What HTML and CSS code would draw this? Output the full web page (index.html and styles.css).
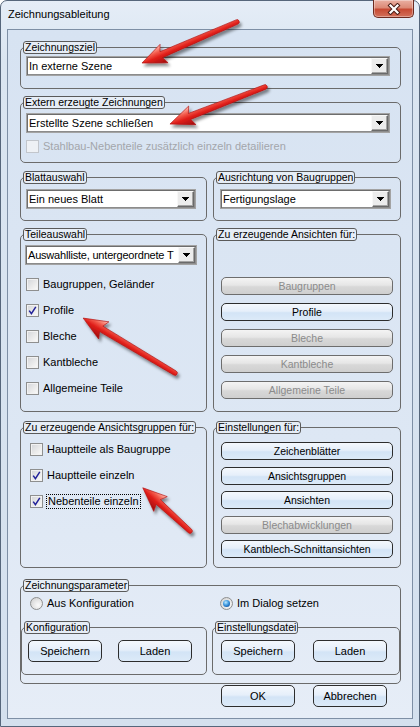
FILE: index.html
```html
<!DOCTYPE html>
<html lang="de">
<head>
<meta charset="utf-8">
<title>Zeichnungsableitung</title>
<link rel="stylesheet" href="styles.css">
</head>
<body>
<div class="window">
  <div class="titlebar">
    <span class="title">Zeichnungsableitung</span>
    <div class="close-btn">
      <svg width="14" height="12" viewBox="0 0 14 12">
        <path d="M3.5 2.5 L10.5 9.5 M10.5 2.5 L3.5 9.5" stroke="#4a1d16" stroke-width="4.2" stroke-linecap="square" fill="none"/>
        <path d="M3.5 2.5 L10.5 9.5 M10.5 2.5 L3.5 9.5" stroke="#ffffff" stroke-width="2.2" stroke-linecap="square" fill="none"/>
      </svg>
    </div>
  </div>
  <div class="client">
    <fieldset class="grp g-ziel">
      <legend>Zeichnungsziel</legend>
      <div class="gbody">
        <div class="combo"><span class="combo-text">In externe Szene</span><span class="combo-btn"><svg width="7" height="4" viewBox="0 0 7 4"><path d="M0 0h7v1h-1v1h-1v1h-1v1h-1v-1h-1v-1h-1v-1h-1z"/></svg></span></div>
      </div>
    </fieldset>

    <fieldset class="grp g-extern">
      <legend>Extern erzeugte Zeichnungen</legend>
      <div class="gbody">
        <div class="combo"><span class="combo-text">Erstellte Szene schließen</span><span class="combo-btn"><svg width="7" height="4" viewBox="0 0 7 4"><path d="M0 0h7v1h-1v1h-1v1h-1v1h-1v-1h-1v-1h-1v-1h-1z"/></svg></span></div>
        <div class="chk disabled"><span class="box"></span><span class="lbl">Stahlbau-Nebenteile zusätzlich einzeln detailieren</span></div>
      </div>
    </fieldset>

    <div class="row row-blatt">
      <fieldset class="grp">
        <legend>Blattauswahl</legend>
        <div class="gbody b-left">
          <div class="combo"><span class="combo-text">Ein neues Blatt</span><span class="combo-btn"><svg width="7" height="4" viewBox="0 0 7 4"><path d="M0 0h7v1h-1v1h-1v1h-1v1h-1v-1h-1v-1h-1v-1h-1z"/></svg></span></div>
        </div>
      </fieldset>
      <fieldset class="grp">
        <legend>Ausrichtung von Baugruppen</legend>
        <div class="gbody b-right">
          <div class="combo"><span class="combo-text">Fertigungslage</span><span class="combo-btn"><svg width="7" height="4" viewBox="0 0 7 4"><path d="M0 0h7v1h-1v1h-1v1h-1v1h-1v-1h-1v-1h-1v-1h-1z"/></svg></span></div>
        </div>
      </fieldset>
    </div>

    <div class="row row-teile">
      <fieldset class="grp">
        <legend>Teileauswahl</legend>
        <div class="gbody t-left">
          <div class="combo"><span class="combo-text tight">Auswahlliste, untergeordnete T</span><span class="combo-btn"><svg width="7" height="4" viewBox="0 0 7 4"><path d="M0 0h7v1h-1v1h-1v1h-1v1h-1v-1h-1v-1h-1v-1h-1z"/></svg></span></div>
          <div class="checks">
            <div class="chk"><span class="box"></span><span class="lbl">Baugruppen, Geländer</span></div>
            <div class="chk"><span class="box on"><svg width="9" height="9" viewBox="0 0 9 9"><path d="M1.2 4.6 L3.4 7.6 L7.8 0.8" stroke="#22229a" stroke-width="1.5" fill="none"/></svg></span><span class="lbl">Profile</span></div>
            <div class="chk"><span class="box"></span><span class="lbl">Bleche</span></div>
            <div class="chk"><span class="box"></span><span class="lbl">Kantbleche</span></div>
            <div class="chk"><span class="box"></span><span class="lbl">Allgemeine Teile</span></div>
          </div>
        </div>
      </fieldset>
      <fieldset class="grp">
        <legend>Zu erzeugende Ansichten für:</legend>
        <div class="gbody t-right">
          <div class="btn dis">Baugruppen</div>
          <div class="btn">Profile</div>
          <div class="btn dis">Bleche</div>
          <div class="btn dis">Kantbleche</div>
          <div class="btn dis">Allgemeine Teile</div>
        </div>
      </fieldset>
    </div>

    <div class="row row-gruppen">
      <fieldset class="grp">
        <legend>Zu erzeugende Ansichtsgruppen für:</legend>
        <div class="gbody r-left">
          <div class="chk"><span class="box"></span><span class="lbl">Hauptteile als Baugruppe</span></div>
          <div class="chk"><span class="box on"><svg width="9" height="9" viewBox="0 0 9 9"><path d="M1.2 4.6 L3.4 7.6 L7.8 0.8" stroke="#22229a" stroke-width="1.5" fill="none"/></svg></span><span class="lbl">Hauptteile einzeln</span></div>
          <div class="chk"><span class="box on"><svg width="9" height="9" viewBox="0 0 9 9"><path d="M1.2 4.6 L3.4 7.6 L7.8 0.8" stroke="#22229a" stroke-width="1.5" fill="none"/></svg></span><span class="lbl focus">Nebenteile einzeln</span></div>
        </div>
      </fieldset>
      <fieldset class="grp">
        <legend>Einstellungen für:</legend>
        <div class="gbody r-right">
          <div class="btn">Zeichenblätter</div>
          <div class="btn">Ansichtsgruppen</div>
          <div class="btn">Ansichten</div>
          <div class="btn dis">Blechabwicklungen</div>
          <div class="btn">Kantblech-Schnittansichten</div>
        </div>
      </fieldset>
    </div>

    <fieldset class="grp g-param">
      <legend>Zeichnungsparameter</legend>
      <div class="gbody p-body">
        <div class="radios">
          <div class="radio"><span class="rb"></span><span class="lbl">Aus Konfiguration</span></div>
          <div class="radio"><span class="rb on"></span><span class="lbl">Im Dialog setzen</span></div>
        </div>
        <div class="subrow">
          <fieldset class="grp sub">
            <legend>Konfiguration</legend>
            <div class="gbody s-left">
              <div class="btn big">Speichern</div>
              <div class="btn big">Laden</div>
            </div>
          </fieldset>
          <fieldset class="grp sub">
            <legend>Einstellungsdatei</legend>
            <div class="gbody s-right">
              <div class="btn big">Speichern</div>
              <div class="btn big">Laden</div>
            </div>
          </fieldset>
        </div>
      </div>
    </fieldset>

    <div class="footer">
      <div class="btn big">OK</div>
      <div class="btn big">Abbrechen</div>
    </div>
  </div>
</div>

<svg class="annotations" width="420" height="727" viewBox="0 0 420 727">
  <defs>
    <linearGradient id="redg" gradientUnits="userSpaceOnUse" x1="0" y1="9" x2="0" y2="-9">
      <stop offset="0" stop-color="#ffb3a6"/>
      <stop offset="0.3" stop-color="#f2584a"/>
      <stop offset="0.55" stop-color="#e01f1a"/>
      <stop offset="1" stop-color="#a30d0d"/>
    </linearGradient>
    <filter id="shadow" x="-20%" y="-20%" width="140%" height="140%">
      <feDropShadow dx="2" dy="3" stdDeviation="1.6" flood-color="#000" flood-opacity="0.45"/>
    </filter>
  </defs>
  <g filter="url(#shadow)">
    <g transform="translate(237 22) rotate(156.65)">
      <path d="M0 -2.3 L82.5 -3.2 L79.5 -10 L103.5 0 L79.5 10 L82.5 3.2 L0 2.3 A2.3 2.3 0 0 1 0 -2.3 Z" fill="url(#redg)" stroke="#b01010" stroke-width="0.6"/>
    </g>
  </g>
  <g filter="url(#shadow)">
    <g transform="translate(265 87) rotate(158.7)">
      <path d="M0 -2.3 L81 -3.2 L78 -10 L102 0 L78 10 L81 3.2 L0 2.3 A2.3 2.3 0 0 1 0 -2.3 Z" fill="url(#redg)" stroke="#b01010" stroke-width="0.6"/>
    </g>
  </g>
  <g filter="url(#shadow)">
    <g transform="translate(175 373) rotate(210.87)">
      <path d="M0 -2.3 L86 -3.2 L83 -10 L107 0 L83 10 L86 3.2 L0 2.3 A2.3 2.3 0 0 1 0 -2.3 Z" fill="url(#redg)" stroke="#b01010" stroke-width="0.6"/>
    </g>
  </g>
  <g filter="url(#shadow)">
    <g transform="translate(190 531) rotate(222.46)">
      <path d="M0 -2.3 L43 -3.2 L40 -10 L64 0 L40 10 L43 3.2 L0 2.3 A2.3 2.3 0 0 1 0 -2.3 Z" fill="url(#redg)" stroke="#b01010" stroke-width="0.6"/>
    </g>
  </g>
</svg>
</body>
</html>
```

FILE: styles.css
```css
* { box-sizing: border-box; }
html, body { margin: 0; padding: 0; }
body {
  width: 420px;
  height: 727px;
  overflow: hidden;
  position: relative;
  font-family: "Liberation Sans", Arial, sans-serif;
  font-size: 11px;
  color: #000;
  background: #ffffff;
}

.window {
  width: 420px;
  height: 727px;
  border: 1px solid #56667b;
  border-radius: 7px 7px 0 0;
  background: linear-gradient(180deg, #e5edf7 0, #dae5f1 60px, #d4e0ee 100%);
  padding: 0 6px 7px 6px;
  display: flex;
  flex-direction: column;
}

.titlebar {
  height: 28px;
  flex: none;
  display: flex;
  justify-content: space-between;
  align-items: flex-start;
}
.title {
  margin: 7px 0 0 1px;
  font-size: 11px;
  line-height: 13px;
}
.close-btn {
  width: 41px;
  height: 18px;
  margin: -1px -1px 0 0;
  border: 1px solid #6d2a1f;
  border-top: none;
  border-radius: 0 0 5px 5px;
  background: linear-gradient(180deg, #eab0a2 0%, #dc8a76 45%, #c74a33 55%, #d2705a 100%);
  box-shadow: inset 0 0 0 1px rgba(255, 255, 255, 0.35);
  display: flex;
  align-items: center;
  justify-content: center;
}

.client {
  flex: 1;
  border: 1px solid #7e8fa5;
  background: linear-gradient(180deg, #d7e3f2 0%, #dde7f4 60%, #e6edf7 100%);
  padding: 11px 11px 0 12px;
  display: flex;
  flex-direction: column;
}

/* group boxes */
.grp {
  margin: 0;
  padding: 0;
  min-width: 0;
  border: 1px solid #6b6b6b;
  border-radius: 5px;
}
.grp > legend {
  margin-left: 2px;
  padding: 0 1px;
  height: 13px;
  border: 1px solid #5a5a5a;
  border-radius: 3px;
  background: #e6edf6;
  font-size: 10.5px;
  line-height: 11px;
  white-space: nowrap;
}

.g-ziel .gbody { padding: 2px 10px 12px 5px; }
.g-extern { margin-top: 7px; }
.g-extern .gbody { padding: 4px 10px 9px 5px; }
.g-extern .chk { margin-top: 7px; }

.row {
  display: grid;
  grid-template-columns: 187px 188px;
  column-gap: 6px;
}
.row-blatt { margin-top: 8px; }
.row-teile { margin-top: 7px; }
.row-gruppen { margin-top: 9px; }

.b-left { padding: 5px 10px 11px 5px; }
.b-right { padding: 5px 9px 11px 6px; }

.t-left { padding: 4px 9px 16px 4px; }
.t-left .checks {
  margin-top: 13px;
  padding-left: 1px;
  display: flex;
  flex-direction: column;
  gap: 13px;
}
.t-right {
  padding: 36px 7px 10px 7px;
  display: flex;
  flex-direction: column;
  gap: 8px;
}

.r-left {
  padding: 9px 8px 8px 9px;
  display: flex;
  flex-direction: column;
  gap: 13px;
}
.r-right {
  padding: 8px 7px 9px 7px;
  display: flex;
  flex-direction: column;
  gap: 6.5px;
}

.g-param { margin-top: 11px; }
.p-body { padding: 5px 0 8px 0; }
.radios {
  display: grid;
  grid-template-columns: 190px auto;
  padding-left: 9px;
  margin-bottom: 11px;
}
.subrow {
  display: grid;
  grid-template-columns: 186px 188px;
  column-gap: 5px;
}
.s-left {
  padding: 6px 0 12px 6px;
  display: flex;
  gap: 16px;
}
.s-right {
  padding: 6px 0 12px 8px;
  display: flex;
  gap: 18px;
}

.footer {
  margin-top: 1px;
  display: flex;
  justify-content: flex-end;
  gap: 18px;
  padding-right: 14px;
}

/* combo box */
.combo {
  height: 20px;
  display: flex;
  background: #ffffff;
  border: 1px solid #a3a3a3;
  box-shadow: inset 1px 1px 0 #6d6d6d, inset -1px -1px 0 #8c8c8c;
  padding: 1px;
}
.combo-text {
  flex: 1;
  min-width: 0;
  overflow: hidden;
  white-space: nowrap;
  padding-left: 1px;
  line-height: 16px;
  font-size: 11px;
}
.combo-text.tight { letter-spacing: -0.2px; }
.combo-btn {
  width: 17px;
  flex: none;
  background: #ececec;
  border: 1px solid;
  border-color: #f8f8f8 #6a6a6a #6a6a6a #f8f8f8;
  box-shadow: inset -1px -1px 0 #a4a4a4;
  display: flex;
  align-items: center;
  justify-content: center;
}
.combo-btn svg { display: block; }

/* checkbox */
.chk {
  display: flex;
  align-items: center;
  gap: 4px;
  height: 13px;
}
.box {
  width: 13px;
  height: 13px;
  flex: none;
  border: 1px solid #8e8f8f;
  background: linear-gradient(135deg, #d3d5d9 0%, #ececec 60%, #fbfbfb 100%);
  box-shadow: inset 0 0 0 1px #f2f2f2;
  display: flex;
  align-items: center;
  justify-content: center;
}
.box svg { display: block; }
.lbl {
  font-size: 11px;
  line-height: 13px;
  white-space: nowrap;
}
.chk.disabled .box {
  border-color: #c2c6cc;
  background: #eef1f5;
  box-shadow: none;
}
.chk.disabled .lbl { color: #a3a6ab; }
.lbl.focus {
  border: 1px dotted #000;
  padding: 0 1px;
  line-height: 13px;
  margin-left: -1px;
}

/* radio */
.radio {
  display: flex;
  align-items: center;
  gap: 4px;
  height: 13px;
}
.rb {
  width: 13px;
  height: 13px;
  flex: none;
  border-radius: 50%;
  border: 1px solid #8e8f8f;
  background: radial-gradient(circle at 65% 65%, #fbfbfb 0%, #e2e2e2 55%, #cacaca 100%);
  display: flex;
  align-items: center;
  justify-content: center;
}
.rb.on::after {
  content: "";
  width: 7px;
  height: 7px;
  border-radius: 50%;
  background: radial-gradient(circle at 40% 35%, #bfe8ff 0%, #4aa2e4 40%, #155fb0 75%, #0d3e7e 100%);
}

/* buttons */
.btn {
  height: 18px;
  display: flex;
  align-items: center;
  justify-content: center;
  border: 1px solid #2d2d2d;
  border-radius: 5px;
  background: linear-gradient(180deg, #f4f8fd 0%, #e6effa 45%, #d3e4f6 55%, #dceaf8 100%);
  font-size: 10.5px;
  line-height: 14px;
  white-space: nowrap;
}
.btn.dis {
  border-color: #6d6d6d;
  color: #8b8b8b;
  background: linear-gradient(180deg, #f4f4f4 0%, #e6e6e6 45%, #d8d8d8 55%, #cfcfcf 100%);
}
.btn.big {
  width: 74px;
  height: 22px;
  flex: none;
  font-size: 11px;
}

/* annotation arrows */
.annotations {
  position: absolute;
  left: 0;
  top: 0;
  pointer-events: none;
}
```
